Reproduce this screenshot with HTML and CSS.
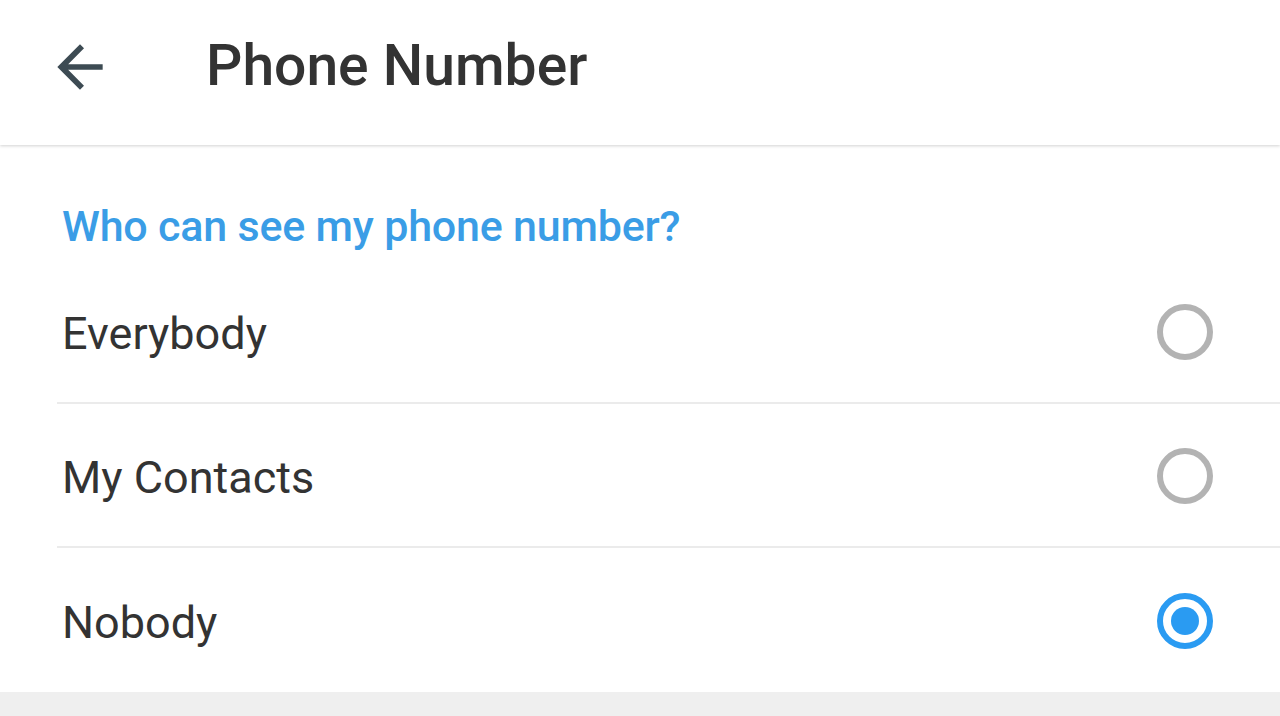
FILE: index.html
```html
<!DOCTYPE html>
<html lang="en">
<head>
  <meta charset="UTF-8" />
  <meta name="viewport" content="width=device-width, initial-scale=1.0"/>
  <title>Phone Number</title>
  <link rel="stylesheet" href="styles.css">
</head>
<body>

  <div class="toolbar">
    <button class="back" aria-label="Back">
      <svg viewBox="0 0 24 24" width="68" height="68">
        <path d="M20 11H7.83l5.59-5.59L12 4l-8 8 8 8 1.41-1.41L7.83 13H20v-2z" fill="#3d4b53"/>
      </svg>
    </button>
    <h1>Phone Number</h1>
  </div>

  <div class="section">
    <h2>Who can see my phone number?</h2>

    <label class="option">
      <span>Everybody</span>
      <input type="radio" name="who" />
      <span class="radio"></span>
    </label>

    <label class="option">
      <span>My Contacts</span>
      <input type="radio" name="who" />
      <span class="radio"></span>
    </label>

    <label class="option last">
      <span>Nobody</span>
      <input type="radio" name="who" checked />
      <span class="radio"></span>
    </label>
  </div>

</body>
</html>
```

FILE: styles.css
```css
body {
  margin: 0;
  font-family: Roboto, 'Noto Sans', sans-serif;
  background: #efefef;
  color: #333;
}
.toolbar {
  height: 145px;
  background: white;
  display: flex;
  align-items: center;
  box-shadow: 0 1px 3px rgba(0,0,0,0.18);
  position: relative;
  z-index: 1;
}
.back {
  background: none;
  border: none;
  padding: 0;
  margin-left: 46px;
  margin-top: -12px;
  width: 68px;
  height: 68px;
  display: flex;
}
h1 {
  margin: -14px 0 0 92px;
  font-size: 57px;
  font-weight: 500;
  color: #333;
  letter-spacing: 0;
}
.section {
  background: white;
  padding-top: 54px;
  box-shadow: 0 1px 3px rgba(0,0,0,0.1);
}
h2 {
  margin: 0 0 0 62px;
  font-size: 43px;
  line-height: 54px;
  font-weight: 500;
  color: #3a9de6;
  letter-spacing: -0.2px;
  padding-bottom: 7px;
}
.option {
  display: flex;
  align-items: center;
  justify-content: space-between;
  height: 144px;
  margin-left: 57px;
  padding: 4px 67px 0 5px;
  border-bottom: 2px solid #ebebeb;
  box-sizing: border-box;
  font-size: 45px;
  color: #333;
  cursor: pointer;
}
.option.last {
  border-bottom: none;
}
.option input {
  display: none;
}
.radio {
  width: 56px;
  height: 56px;
  margin-top: -2px;
  border-radius: 50%;
  border: 6px solid #b3b3b3;
  box-sizing: border-box;
  display: flex;
  align-items: center;
  justify-content: center;
}
.option input:checked + .radio {
  border-color: #2a9bf2;
}
.option input:checked + .radio::after {
  content: "";
  width: 28px;
  height: 28px;
  border-radius: 50%;
  background: #2a9bf2;
}
```
